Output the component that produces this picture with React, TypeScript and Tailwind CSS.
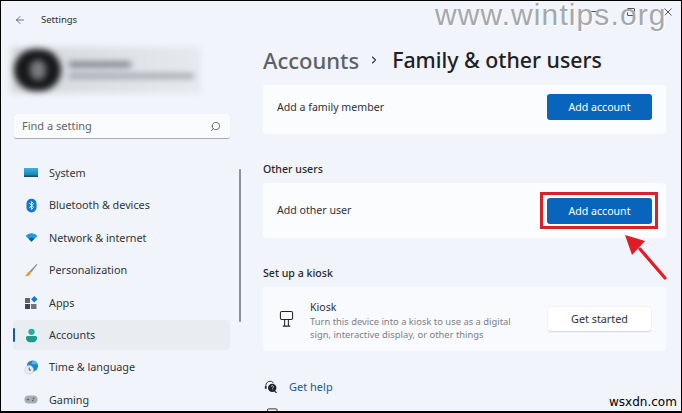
import React from 'react';
import { ArrowLeft, ChevronRight, Search } from 'lucide-react';

const FONT = 'font-["Noto_Sans",sans-serif]';

function SystemIcon() {
  return (
    <svg viewBox="0 0 16 12" className="h-[12px] w-[16px]">
      <defs>
        <linearGradient id="sys" x1="0" y1="0" x2="0" y2="1">
          <stop offset="0" stopColor="#3fb2dc" />
          <stop offset="1" stopColor="#0f7fb8" />
        </linearGradient>
      </defs>
      <rect x="1" y="1" width="14" height="8" fill="url(#sys)" />
      <rect x="1" y="8.5" width="14" height="1.5" fill="#14506f" />
    </svg>
  );
}

function BluetoothIcon() {
  return (
    <svg viewBox="0 0 12 16" className="h-[15px] w-[11px]">
      <rect x="0.5" y="0.5" width="11" height="15" rx="5.5" fill="#0f78e0" />
      <path d="M3.5 5.2 8.3 10 6 12.3V3.7L8.3 6 3.5 10.8" fill="none" stroke="#fff" strokeWidth="1" />
    </svg>
  );
}

function NetworkIcon() {
  return (
    <svg viewBox="0 0 14 10" className="h-[9px] w-[13px]">
      <path d="M0.5 3.2C4 -0.6 10-0.6 13.5 3.2L7 9.6Z" fill="#1c9bd8" />
      <path d="M3.8 6.5C5.6 5 8.4 5 10.2 6.5L7 9.6Z" fill="#0b5fa8" />
    </svg>
  );
}

function BrushIcon() {
  return (
    <svg viewBox="0 0 14 14" className="h-[14px] w-[14px]">
      <path d="M12.8 0.8 5.4 8.6 6.8 10 13.4 1.6Z" fill="#8a9098" />
      <path d="M5.2 8.4C3.4 9 3 10.4 2.4 11.6 2 12.4 1.4 12.8 0.8 13.2 3.4 13.6 6 12.6 6.9 10.1Z" fill="#ee9a3c" />
    </svg>
  );
}

function AppsIcon() {
  return (
    <svg viewBox="0 0 14 14" className="h-[14px] w-[14px]">
      <rect x="1" y="2" width="5" height="5" fill="#5d6670" />
      <rect x="1" y="8" width="5" height="5" fill="#3e454d" />
      <rect x="7" y="8" width="5.5" height="5" fill="#6d757e" />
      <rect x="8" y="1" width="4.6" height="4.6" transform="rotate(45 10.3 3.3)" fill="#1878c8" />
    </svg>
  );
}

function AccountIcon() {
  return (
    <svg viewBox="0 0 14 16" className="h-[15px] w-[13px]">
      <circle cx="7" cy="4" r="3.4" fill="#23b09b" />
      <path d="M1 10.6C1 9.2 2 8.6 3.2 8.6h7.6c1.2 0 2.2.6 2.2 2 0 3.4-3 4.8-6 4.8s-6-1.4-6-4.8Z" fill="#1a9c8c" />
    </svg>
  );
}

function TimeIcon() {
  return (
    <svg viewBox="0 0 16 16" className="h-[15px] w-[15px]">
      <circle cx="9" cy="6.5" r="6" fill="#1d87cc" />
      <path d="M9 .5a6 6 0 0 1 5.6 4H8Z" fill="#54b4e4" />
      <circle cx="5.5" cy="10.5" r="4.6" fill="#e8edf2" stroke="#b7c2cc" strokeWidth=".6" />
      <path d="M5.5 8v2.8h2" fill="none" stroke="#3d4c5c" strokeWidth=".9" />
    </svg>
  );
}

function GamingIcon() {
  return (
    <svg viewBox="0 0 16 10" className="h-[9px] w-[14px]">
      <rect x="0.5" y="0.5" width="15" height="9" rx="4.5" fill="#a9afb8" />
      <path d="M3 5h3M4.5 3.5v3" stroke="#5f6670" strokeWidth="1" />
      <circle cx="11" cy="3.8" r="1" fill="#5f6670" />
      <circle cx="10" cy="6.2" r="1" fill="#5f6670" />
    </svg>
  );
}

function KioskIcon() {
  return (
    <svg viewBox="0 0 16 18" className="h-[18px] w-[15px] shrink-0" fill="none" stroke="#222" strokeWidth="1.1">
      <rect x="1.5" y="1" width="13" height="8.5" rx="1.6" />
      <path d="M6 9.5v6.8M10 9.5v6.8M4 16.6h8" />
    </svg>
  );
}

function HelpIcon() {
  return (
    <svg viewBox="0 0 16 16" className="h-[14px] w-[14px]">
      <path d="M2 8V6.4a5 5 0 0 1 9-3" fill="none" stroke="#222" strokeWidth="1" />
      <circle cx="9.4" cy="9" r="4.8" fill="#1b2330" />
      <path d="M12 12.5l2.4 2.2" stroke="#1b2330" strokeWidth="1.4" />
      <rect x="1" y="7" width="2" height="3" fill="#222" />
      <path d="M8.2 7.6a1.3 1.3 0 1 1 1.7 1.4v.9M9.9 11v.6" fill="none" stroke="#fff" strokeWidth=".8" />
    </svg>
  );
}

function FeedbackIcon() {
  return (
    <svg viewBox="0 0 16 16" className="h-[14px] w-[14px]" fill="none" stroke="#222" strokeWidth="1">
      <rect x="4" y="1" width="11" height="9" rx="1.2" />
      <rect x="1" y="5" width="6" height="6" rx="1" fill="#f1f4fa" />
    </svg>
  );
}

const navItems = [
  { label: 'System', icon: <SystemIcon /> },
  { label: 'Bluetooth & devices', icon: <BluetoothIcon /> },
  { label: 'Network & internet', icon: <NetworkIcon /> },
  { label: 'Personalization', icon: <BrushIcon /> },
  { label: 'Apps', icon: <AppsIcon /> },
  { label: 'Accounts', icon: <AccountIcon />, active: true },
  { label: 'Time & language', icon: <TimeIcon /> },
  { label: 'Gaming', icon: <GamingIcon /> },
];

function AddButton() {
  return (
    <button className="flex h-[26px] w-[105px] items-center justify-center rounded-[3px] bg-[#0865bb] pt-[1px] text-[10.6px] text-white">
      Add account
    </button>
  );
}

function Sidebar() {
  return (
    <aside className="flex w-[249px] shrink-0 flex-col [&>*]:shrink-0">
      <div className="flex h-[36px] items-center gap-[15px] pl-[13px] pt-[2px] text-[9.5px] text-[#2b2f36]">
        <ArrowLeft className="h-[12px] w-[12px] text-[#444]" strokeWidth={1.5} />
        <span>Settings</span>
      </div>
      {/* blurred profile block */}
      <div className="ml-[10px] mt-[10px] flex h-[46px] w-[190px] items-center gap-[8px] bg-gradient-to-r from-[#d3d6da] to-[#e6e9ed] pl-[3px] blur-[3px]">
        <div className="flex h-[42px] w-[47px] items-center justify-center rounded-full bg-[#17181a]">
          <div className="h-[20px] w-[16px] rounded-full bg-[#77797c]" />
        </div>
        <div className="flex flex-col gap-[7px]">
          <div className="h-[5px] w-[62px] bg-[#6f747b]" />
          <div className="h-[4px] w-[125px] bg-[#8e939a]" />
        </div>
      </div>
      <div className="ml-[13px] mt-[21px] flex h-[25px] w-[216px] items-center justify-between rounded-[3px] border-b border-b-[#a9adb3] bg-[#fafbfd] pl-[8px] pr-[9px] text-[11px] text-[#5f646b] shadow-[0_0_1px_rgba(0,0,0,0.15)]">
        <span>Find a setting</span>
        <Search className="h-[11px] w-[11px] -scale-x-100 text-[#444]" strokeWidth={1.6} />
      </div>
      <div className="relative mt-[18px] flex flex-col [&>*]:shrink-0">
        {navItems.map((item) => (
          <div key={item.label} className="flex h-[32.4px] items-center">
            <div className={`relative ml-[12px] flex h-[30px] w-[217px] items-center rounded-[4px] ${item.active ? 'bg-[#e9edf2]' : ''}`}>
              {item.active && <span className="absolute left-0 top-[8px] h-[14px] w-[2px] rounded-full bg-[#0f5fb0]" />}
              <span className="flex w-[35px] shrink-0 justify-center pl-[1px]">{item.icon}</span>
              <span className="ml-[1px] text-[10.8px] text-[#30353c]">{item.label}</span>
            </div>
          </div>
        ))}
        <span className="absolute left-[238px] top-[12px] h-[153px] w-[2px] rounded-full bg-[#8d9197]" />
      </div>
    </aside>
  );
}

function Main() {
  return (
    <main className="flex min-w-0 flex-1 flex-col pl-[13px] pr-[15px] [&>*]:shrink-0">
      <header className="flex h-[84px] items-center pt-[33px] font-medium leading-none">
        <span className="text-[22px] text-[#5c6167]">Accounts</span>
        <ChevronRight className="ml-[9px] mr-[12px] h-[12px] w-[12px] text-[#333]" strokeWidth={2.2} />
        <span className="text-[21.3px] text-[#1d2025]">Family &amp; other users</span>
      </header>

      <section className="flex h-[49px] items-center justify-between rounded-[3px] bg-[#fbfcfe] pb-[5px] pl-[14px] pr-[14px] text-[10.6px] text-[#2d3137]">
        <span className="pt-[1px]">Add a family member</span>
        <AddButton />
      </section>

      <h2 className="flex h-[49px] items-end pb-[5px] text-[10.6px] font-medium text-[#24282d]">Other users</h2>
      <section className="flex h-[55px] items-center justify-between rounded-[3px] bg-[#fbfcfe] pl-[14px] pr-[8px] text-[10.6px] text-[#2d3137]">
        <span className="pt-[1px]">Add other user</span>
        <div className="border-[3px] border-[#d8212f] pb-[2px] pl-[4px] pr-[3px] pt-[3px]">
          <AddButton />
        </div>
      </section>

      <h2 className="flex h-[49px] items-end pb-[5px] text-[10.6px] font-medium text-[#24282d]">Set up a kiosk</h2>
      <section className="flex h-[64px] items-center rounded-[3px] bg-[#f9fafd] pl-[16px] pr-[15px]">
        <KioskIcon />
        <div className="ml-[16px] flex flex-1 flex-col pt-[3px]">
          <span className="text-[10.6px] leading-[13px] text-[#2d3137]">Kiosk</span>
          <span className="mt-[1px] text-[9.4px] leading-[13px] text-[#7c8086]">
            Turn this device into a kiosk to use as a digital
            <br />
            sign, interactive display, or other things
          </span>
        </div>
        <button className="flex h-[25px] w-[103px] items-center justify-center rounded-[3px] border-b border-b-[#d5d8dc] bg-white pt-[1px] text-[10.8px] text-[#2d3137] shadow-[0_0_2px_rgba(0,0,0,0.12)]">
          Get started
        </button>
      </section>

      <div className="ml-[1px] mt-[24px] flex flex-col [&>*]:shrink-0">
        <div className="flex h-[24px] items-center gap-[11px] text-[11px] text-[#25578c]">
          <HelpIcon />
          <span>Get help</span>
        </div>
        <div className="mt-[4px] flex h-[24px] items-center gap-[11px] text-[11px] text-[#25578c]">
          <FeedbackIcon />
          <span>Give feedback</span>
        </div>
      </div>
    </main>
  );
}

export default function App() {
  return (
    <div className={`relative flex h-[413px] w-[682px] overflow-hidden border-x border-b-2 border-t border-black bg-[#f1f4fa] ${FONT}`}>
      <Sidebar />
      <Main />

      {/* window buttons */}
      <span className="absolute left-[587px] top-[10px] h-[1px] w-[8px] bg-[#555]" />
      <span className="absolute left-[626px] top-[7px] h-[8px] w-[8px] rounded-[1px] border border-[#555]" />
      <svg viewBox="0 0 8 8" className="absolute left-[663px] top-[7px] h-[8px] w-[8px]" stroke="#444" strokeWidth="0.9">
        <path d="M0.5 0.5 7.5 7.5M7.5 0.5 0.5 7.5" />
      </svg>

      {/* watermarks */}
      <span className="absolute left-[434px] top-0 font-['Liberation_Sans',sans-serif] text-[30px] leading-[28px] tracking-[1.1px] text-[#a5a8ac] [text-shadow:1px_1px_0_#fff]">
        www.wintips.org
      </span>
      <span className="absolute left-[608px] top-[393px] font-['DejaVu_Sans',sans-serif] text-[12px] leading-[16px] text-black">
        wsxdn.com
      </span>

      {/* arrow pointing at the button */}
      <svg viewBox="0 0 50 50" className="absolute left-[619px] top-[230px] h-[50px] w-[50px]">
        <path d="M45 47 20 18" stroke="#e31b25" strokeWidth="3.2" strokeLinecap="round" />
        <path d="M5 4 25 10 12 24Z" fill="#e31b25" />
      </svg>
    </div>
  );
}
